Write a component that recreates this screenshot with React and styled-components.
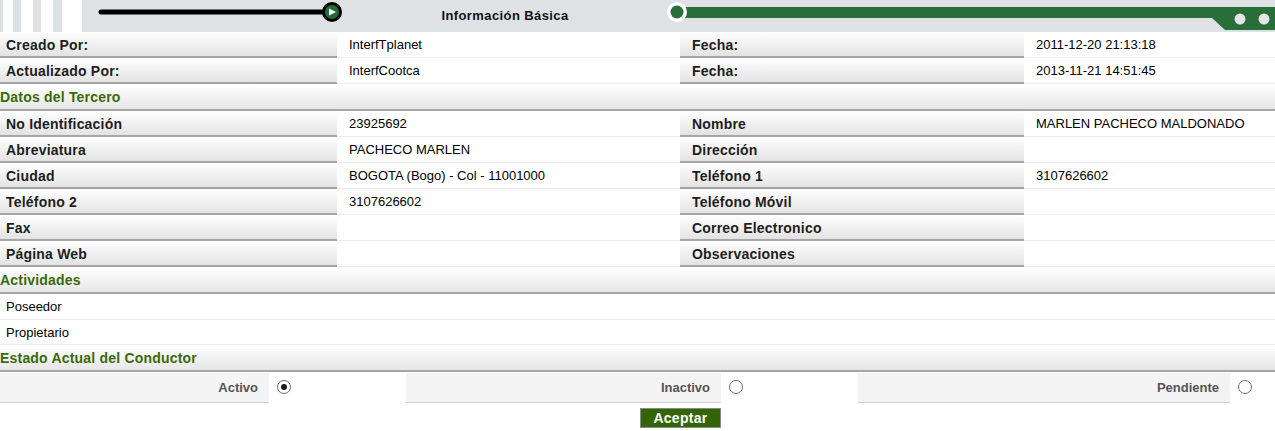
import styled, { createGlobalStyle } from 'styled-components'

const GlobalStyle = createGlobalStyle`
  *, *::before, *::after { box-sizing: border-box; }
  body {
    margin: 0;
    background: #fff;
    font-family: 'Liberation Sans', Arial, sans-serif;
  }
`

const Page = styled.div`
  width: 1275px;
`

const Header = styled.div`
  display: flex;
  height: 32px;
  background: #dfe2e5;
`

const Deco = styled.svg`
  display: block;
  flex: 0 0 ${p => p.$w}px;
  height: 32px;
`

const GreenDeco = styled.svg`
  display: block;
  flex: 1;
  height: 32px;
`

const Title = styled.div`
  flex: 0 0 320px;
  display: flex;
  align-items: center;
  justify-content: center;
  font-size: 13px;
  font-weight: bold;
  letter-spacing: 0.4px;
  color: #111;
  padding-bottom: 1px;
`

const Row = styled.div`
  display: grid;
  grid-template-columns: 337px 343px 344px 1fr;
  height: 26px;
`

const Label = styled.div`
  display: flex;
  align-items: center;
  padding-left: ${p => p.$inset}px;
  padding-top: 2px;
  background: linear-gradient(#ffffff, #e3e3e3);
  border-bottom: 2px solid #a5a5a5;
  font-size: 14px;
  font-weight: bold;
  letter-spacing: 0.2px;
  color: #1e1e1e;
`

const Value = styled.div`
  display: flex;
  align-items: center;
  padding-left: 12px;
  padding-bottom: 1px;
  border-bottom: 1px solid #ececec;
  font-size: 13px;
  color: #000;
`

const Section = styled.div`
  display: flex;
  align-items: center;
  height: 27px;
  padding-top: 1px;
  background: linear-gradient(#ffffff, #e6e6e6);
  border-bottom: 2px solid #a5a5a5;
  font-size: 14px;
  font-weight: bold;
  letter-spacing: 0.2px;
  color: #3a6a08;
`

const Activity = styled.div`
  display: flex;
  align-items: center;
  height: ${p => p.$h}px;
  padding-left: 6px;
  border-bottom: 1px solid #ececec;
  font-size: 13px;
  color: #000;
`

const RadioRow = styled.div`
  display: grid;
  grid-template-columns: 269px 137px 315px 137px 372px 45px;
  height: 30px;
  margin-top: 1px;
`

const RadioLabel = styled.div`
  display: flex;
  align-items: center;
  justify-content: flex-end;
  padding-right: 11px;
  background: #f4f4f4;
  border-bottom: 1px solid #cdcdcd;
  font-size: 13px;
  font-weight: bold;
  color: #555;
`

const RadioCell = styled.div`
  display: flex;
  align-items: center;
  padding-left: 8px;
  padding-bottom: 2px;
`

const Radio = styled.span`
  position: relative;
  width: 14px;
  height: 14px;
  border-radius: 50%;
  border: 1px solid #6f6f6f;
  background: #fff;

  &::after {
    content: '';
    display: ${p => (p.$checked ? 'block' : 'none')};
    position: absolute;
    left: 3px;
    top: 3px;
    width: 6px;
    height: 6px;
    border-radius: 50%;
    background: #1a1a1a;
  }
`

const Actions = styled.div`
  display: flex;
  padding: 5px 0 0 640px;
`

const Button = styled.button`
  width: 81px;
  height: 20px;
  padding: 0;
  background: #336600;
  border: 1px solid #8a8a8a;
  color: #fff;
  font-family: 'Liberation Sans', Arial, sans-serif;
  font-size: 14px;
  font-weight: bold;
  letter-spacing: 0.3px;
  cursor: pointer;
`

const info = [
  ['Creado Por:', 'InterfTplanet', 'Fecha:', '2011-12-20 21:13:18'],
  ['Actualizado Por:', 'InterfCootca', 'Fecha:', '2013-11-21 14:51:45'],
]

const tercero = [
  ['No Identificación', '23925692', 'Nombre', 'MARLEN PACHECO MALDONADO'],
  ['Abreviatura', 'PACHECO MARLEN', 'Dirección', ''],
  ['Ciudad', 'BOGOTA (Bogo) - Col - 11001000', 'Teléfono 1', '3107626602'],
  ['Teléfono 2', '3107626602', 'Teléfono Móvil', ''],
  ['Fax', '', 'Correo Electronico', ''],
  ['Página Web', '', 'Observaciones', ''],
]

const estados = [
  { label: 'Activo', checked: true },
  { label: 'Inactivo', checked: false },
  { label: 'Pendiente', checked: false },
]

const InfoRow = ({ cells }) => (
  <Row>
    <Label $inset={6}>{cells[0]}</Label>
    <Value>{cells[1]}</Value>
    <Label $inset={12}>{cells[2]}</Label>
    <Value>{cells[3]}</Value>
  </Row>
)

const App = () => {
  return (
    <Page>
      <GlobalStyle />
      <Header>
        <Deco $w={90} viewBox="0 0 90 32">
          <rect x="3" y="0" width="10" height="32" fill="#fff" />
          <rect x="21" y="0" width="12" height="32" fill="#fff" />
          <rect x="41" y="0" width="12" height="32" fill="#fff" />
          <rect x="62" y="0" width="20" height="32" fill="#fff" />
        </Deco>
        <Deco $w={255} viewBox="0 0 255 32">
          <line x1="11" y1="12" x2="236" y2="12" stroke="#000" strokeWidth="5" strokeLinecap="round" />
          <circle cx="242" cy="12" r="8.5" fill="#246b35" stroke="#000" strokeWidth="3" />
          <path d="M239 8.5 L246 12 L239 15.5 Z" fill="#fff" />
        </Deco>
        <Title>Información Básica</Title>
        <GreenDeco viewBox="0 0 610 32" preserveAspectRatio="xMinYMin meet">
          <rect x="12" y="7" width="598" height="11" fill="#286e38" />
          <path d="M546 17 L560 30 L610 30 L610 17 Z" fill="#286e38" />
          <circle cx="12" cy="12" r="10" fill="#fff" />
          <circle cx="12" cy="12" r="6.5" fill="#286e38" />
          <circle cx="575" cy="19" r="5.5" fill="#e2e4e6" />
          <circle cx="599" cy="19" r="5.5" fill="#e2e4e6" />
        </GreenDeco>
      </Header>

      {info.map((cells, i) => (
        <InfoRow key={i} cells={cells} />
      ))}

      <Section>Datos del Tercero</Section>
      {tercero.map((cells, i) => (
        <InfoRow key={i} cells={cells} />
      ))}

      <Section>Actividades</Section>
      <Activity $h={26}>Poseedor</Activity>
      <Activity $h={25}>Propietario</Activity>

      <Section>Estado Actual del Conductor</Section>
      <RadioRow>
        {estados.map(e => (
          <>
            <RadioLabel key={e.label}>{e.label}</RadioLabel>
            <RadioCell key={e.label + '-r'}>
              <Radio $checked={e.checked} />
            </RadioCell>
          </>
        ))}
      </RadioRow>

      <Actions>
        <Button>Aceptar</Button>
      </Actions>
    </Page>
  )
}

export default App
